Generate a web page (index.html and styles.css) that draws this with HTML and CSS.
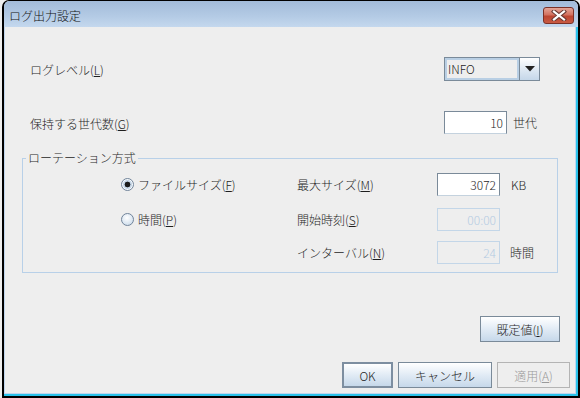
FILE: index.html
```html
<!DOCTYPE html>
<html lang="ja">
<head>
    <meta charset="UTF-8">
    <meta name="viewport" content="width=device-width, initial-scale=1.0">
    <title>ログ出力設定</title>
    <link rel="stylesheet" href="styles.css">
</head>
<body>
    <div class="window">
        <div class="titlebar">
            <span class="title">ログ出力設定</span>
            <span class="close">
                <svg width="16" height="11" viewBox="0 0 16 11">
                    <path d="M3 1.5 L13 9.5 M13 1.5 L3 9.5" stroke="#6a3a34" stroke-width="4.2" stroke-linecap="square"/>
                    <path d="M3 1.5 L13 9.5 M13 1.5 L3 9.5" stroke="#ffffff" stroke-width="2.2" stroke-linecap="square"/>
                </svg>
            </span>
        </div>
        <div class="frame">
            <div class="client">
                <div class="row row-level">
                    <span class="label">ログレベル(<u>L</u>)</span>
                    <div class="combo">
                        <span class="combo-text">INFO</span>
                        <span class="combo-btn">
                            <svg width="10" height="6" viewBox="0 0 10 6"><polygon points="0,0 10,0 5,5.5" fill="#222"/></svg>
                        </span>
                    </div>
                </div>

                <div class="row row-keep">
                    <span class="label">保持する世代数(<u>G</u>)</span>
                    <div class="control">
                        <span class="field">10</span>
                        <span class="unit">世代</span>
                    </div>
                </div>

                <div class="group">
                    <span class="group-title">ローテーション方式</span>
                    <div class="group-row">
                        <span class="radio-cell"><span class="radio checked"></span><span>ファイルサイズ(<u>F</u>)</span></span>
                        <span class="label-cell">最大サイズ(<u>M</u>)</span>
                        <span class="field">3072</span>
                        <span class="unit">KB</span>
                    </div>
                    <div class="group-row second">
                        <span class="radio-cell"><span class="radio"></span><span>時間(<u>P</u>)</span></span>
                        <span class="label-cell">開始時刻(<u>S</u>)</span>
                        <span class="field disabled">00:00</span>
                    </div>
                    <div class="group-row third">
                        <span class="radio-cell"></span>
                        <span class="label-cell">インターバル(<u>N</u>)</span>
                        <span class="field disabled">24</span>
                        <span class="unit unit-hour">時間</span>
                    </div>
                </div>

                <div class="default-row">
                    <button class="btn btn-default">既定値(<u>I</u>)</button>
                </div>

                <div class="footer">
                    <button class="btn btn-ok">OK</button>
                    <button class="btn btn-cancel">キャンセル</button>
                    <button class="btn btn-apply" disabled>適用(<u>A</u>)</button>
                </div>
            </div>
        </div>
    </div>
</body>
</html>
```

FILE: styles.css
```css
html {
    background: #eeeeee;
}

body {
    margin: 0;
    font-family: "Noto Sans CJK JP", "Liberation Sans", sans-serif;
    font-size: 12px;
    font-weight: 300;
    line-height: 14px;
    color: #1e1e1e;
}

u {
    text-decoration: underline;
    text-underline-offset: 1px;
}

.window {
    margin-left: 2px;
    width: 578px;
    height: 398px;
    box-sizing: border-box;
    border: 2px solid #000;
    border-top-width: 1px;
    border-radius: 7px 7px 0 0;
    overflow: hidden;
    display: flex;
    flex-direction: column;
}

/* title bar */
.titlebar {
    height: 26px;
    flex: none;
    display: flex;
    justify-content: space-between;
    align-items: flex-start;
    background: linear-gradient(#a2bbd9, #b4cbe5 60%, #c4d8ee);
}

.title {
    margin: 8px 0 0 5px;
    font-size: 12px;
    color: #111;
}

.close {
    margin: 6px 4px 0 0;
    width: 31px;
    height: 17px;
    box-sizing: border-box;
    border: 1px solid #7b3127;
    border-radius: 3px;
    background: linear-gradient(#e4a597, #d37260 45%, #bc4632 55%, #c85a43);
    display: flex;
    align-items: center;
    justify-content: center;
}

/* client area */
.frame {
    flex: 1;
    border-right: 2px solid #2ac2ea;
    border-bottom: 2px solid #2ac2ea;
    display: flex;
}

.client {
    flex: 1;
    background: #eeeeee;
    border: 1px solid #c0d6ee;
    border-top: none;
}

.row {
    display: grid;
    grid-template-columns: 414px auto;
    align-items: center;
    margin-left: 25px;
}

.row-level {
    margin-top: 30px;
    height: 24px;
}

.row-keep {
    margin-top: 30px;
    height: 23px;
}

.label {
    padding-top: 2px;
}

.combo {
    width: 96px;
    height: 24px;
    box-sizing: border-box;
    border: 1px solid #7a8a99;
    display: flex;
}

.combo-text {
    flex: 1;
    border: 2px solid #b9cfe4;
    background: #eeeeee;
    padding-left: 1px;
    display: flex;
    align-items: center;
}

.combo-btn {
    width: 19px;
    border-left: 1px solid #7a8a99;
    background: linear-gradient(#ffffff, #dfe9f3 50%, #c5d7e9);
    display: flex;
    align-items: center;
    justify-content: center;
}

.control {
    display: flex;
    align-items: center;
}

.field {
    width: 63px;
    height: 23px;
    box-sizing: border-box;
    border: 1px solid #7a8a99;
    border-bottom-color: #c4d2de;
    background: #fff;
    padding-right: 3px;
    display: flex;
    align-items: center;
    justify-content: flex-end;
}

.field.disabled {
    border-color: #c3d6e8;
    background: #eeeeee;
    color: #b4cbe2;
}

.unit {
    margin-left: 6px;
}

/* rotation group */
.group {
    position: relative;
    margin: 24px 0 0 17px;
    width: 536px;
    height: 115px;
    box-sizing: border-box;
    border: 1px solid #b8d0e8;
    padding: 14px 0 0 98px;
}

.group-title {
    position: absolute;
    top: -8px;
    left: 3px;
    padding: 0 2px;
    background: #eeeeee;
}

.group-row {
    height: 23px;
    display: flex;
    align-items: center;
}

.group-row.second {
    margin-top: 12px;
}

.group-row.third {
    margin-top: 10px;
}

.group-row .unit {
    margin-left: 11px;
}

.group-row .unit-hour {
    margin-left: 10px;
}

.radio-cell {
    width: 176px;
    display: flex;
    align-items: center;
    gap: 4px;
}

.radio {
    width: 13px;
    height: 13px;
    box-sizing: border-box;
    border: 1px solid #71849a;
    border-radius: 50%;
    background: radial-gradient(circle at 45% 35%, #ffffff, #dbe6f1 60%, #c2d4e6);
}

.radio.checked {
    background: radial-gradient(circle, #1a1a1a 0 2.6px, #c7d7e8 3.2px 4.2px, #f4f8fb 4.8px);
}

.label-cell {
    width: 140px;
}

/* buttons */
.btn {
    font-family: inherit;
    font-size: 12px;
    font-weight: 300;
    color: #1e1e1e;
    height: 26px;
    box-sizing: border-box;
    border: 1px solid #7a8a99;
    background: linear-gradient(#ffffff, #e4edf6 45%, #c6d8ea);
    padding: 0;
}

.default-row {
    margin-top: 43px;
    display: flex;
    justify-content: flex-end;
    padding-right: 15px;
}

.btn-default {
    width: 80px;
}

.footer {
    margin-top: 20px;
    display: flex;
    justify-content: flex-end;
    gap: 5px;
    padding-right: 5px;
}

.btn-ok {
    width: 51px;
    border: 2px solid #7d8ea0;
}

.btn-cancel {
    width: 94px;
}

.btn-apply {
    width: 73px;
    border-color: #b4b4b4;
    background: #eeeeee;
    color: #9a9a9a;
}
```
